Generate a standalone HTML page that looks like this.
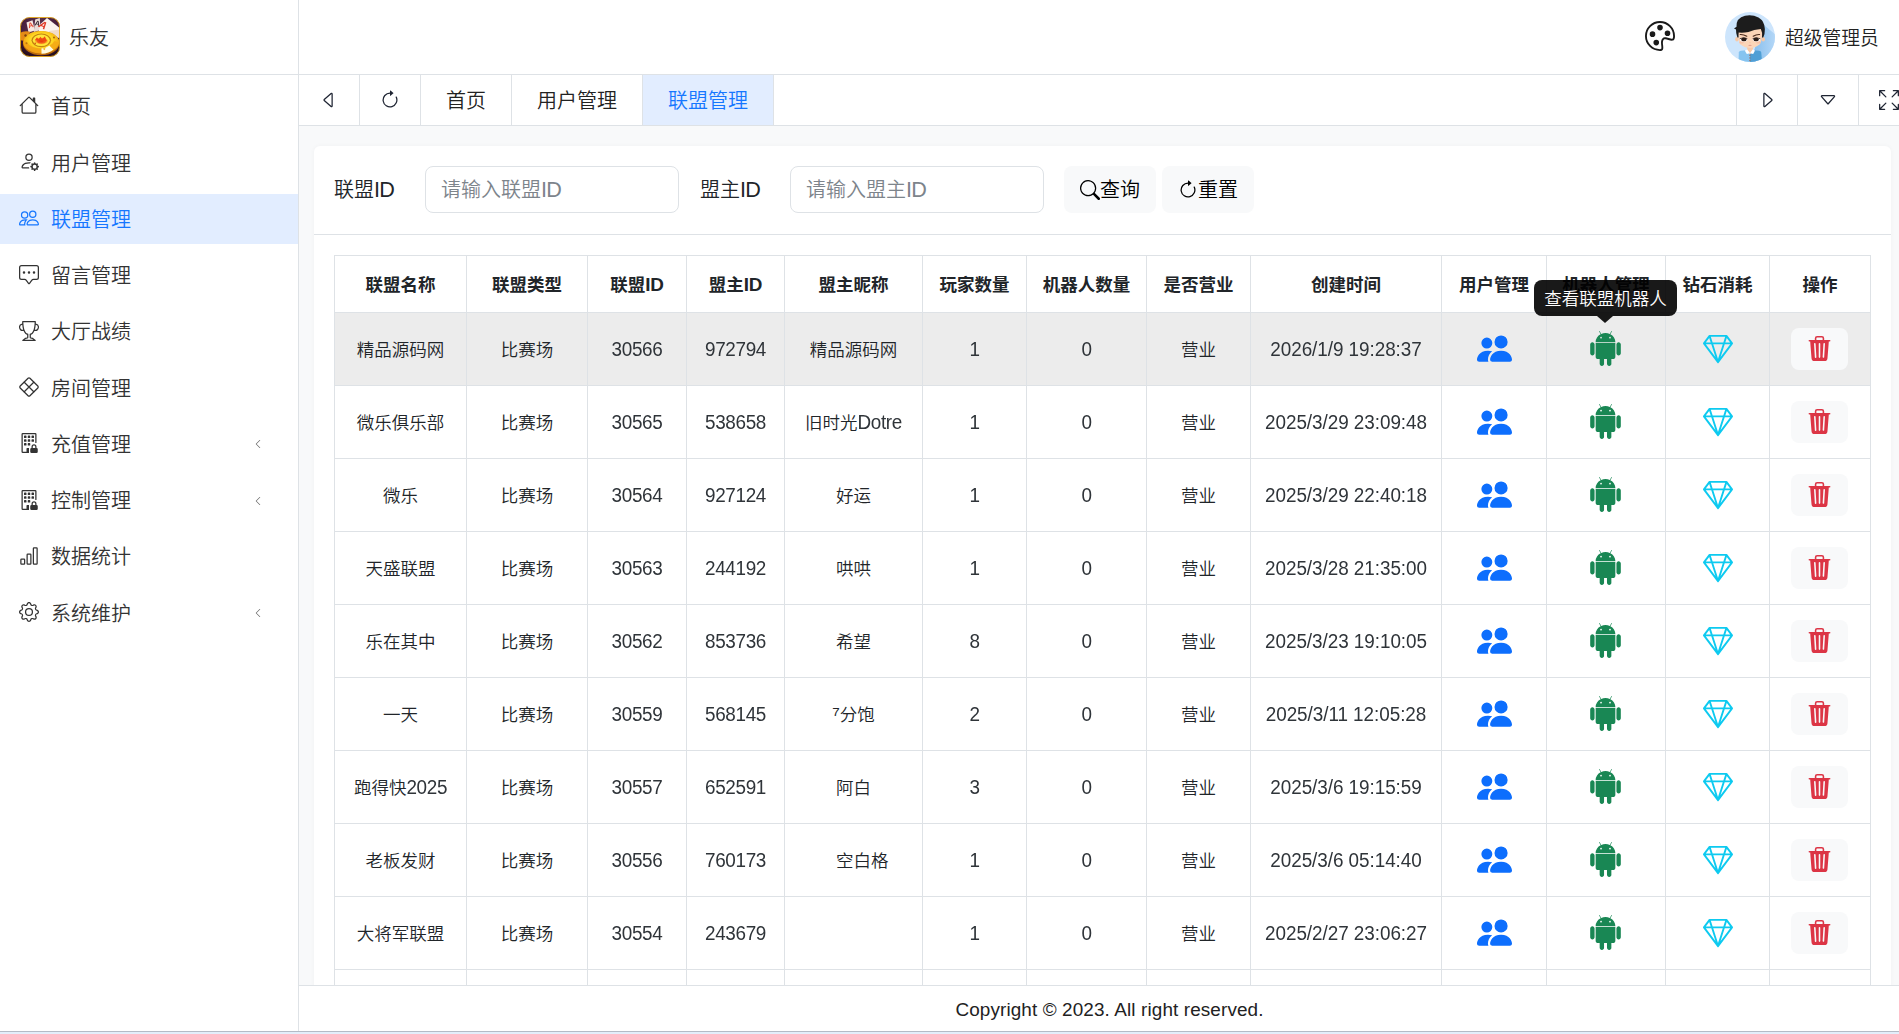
<!DOCTYPE html>
<html lang="zh-CN">
<head>
<meta charset="utf-8">
<title>联盟管理</title>
<style>
*{box-sizing:border-box}
html,body{margin:0;padding:0}
body{width:1899px;height:1034px;overflow:hidden;position:relative;background:#fff;color:#212529;
 font-family:"Liberation Sans","Noto Sans CJK SC",sans-serif;font-size:20px;line-height:1.5;font-weight:350}
svg.ic{display:inline-block;vertical-align:middle;flex:none}
.sidebar{position:absolute;left:0;top:0;width:299px;height:1031px;border-right:1px solid #dee2e6;background:#fff}
.logo{height:75px;border-bottom:1px solid #dee2e6;position:relative}
.logo svg.lg{position:absolute;left:20px;top:17px}
.brand{position:absolute;left:69px;top:8px;line-height:60px;font-size:20px;color:#333}
.menu{list-style:none;margin:0;padding:0;position:absolute;top:80.9px;left:0;width:298px}
.mi{height:50px;margin-bottom:6.4px;position:relative;color:#333;font-size:20px;line-height:50px}
.mi .mic{position:absolute;left:19px;top:14px}
.mi .mt{position:absolute;left:51px;top:1.5px}
.mi .arr{position:absolute;left:253px;top:20px;color:#666}
.mi.act{background:#e2edff;color:#1677ff}
.header{position:absolute;left:299px;top:0;width:1621px;height:75px;border-bottom:1px solid #dee2e6;background:#fff}
.header .pal{position:absolute;left:1346px;top:21px;color:#1a1a1a}
.user{position:absolute;left:1426px;top:12px;height:50px}
.user svg.av{position:absolute;left:0;top:0}
.uname{position:absolute;left:60px;top:2px;line-height:50px;font-size:18.75px;white-space:nowrap;color:#222}
.tabs{position:absolute;left:299px;top:75px;width:1621px;height:51px;border-bottom:1px solid #dee2e6;background:#fff;display:flex}
.tb{width:61px;height:50px;border-right:1px solid #dee2e6;display:flex;align-items:center;justify-content:center;color:#1f2533}
.tab{height:50px;padding:1px 25px 0;border-right:1px solid #dee2e6;line-height:50px;font-size:20px;color:#222;white-space:nowrap}
.tab.act{background:#e2edff;color:#1677ff}
.tr{position:absolute;left:1437px;top:0;display:flex;border-left:1px solid #dee2e6}
.content{position:absolute;left:299px;top:126px;width:1600px;height:859px;background:#f8f9fa;overflow:hidden}
.card{position:absolute;left:15px;top:20px;width:1577px;height:1000px;background:#fff;border-radius:6px;box-shadow:0 0 5px rgba(0,0,0,.035)}
.search{position:absolute;left:0;top:0;width:100%;height:88px}
.search label{position:absolute;top:21px;line-height:47px;font-size:20px;color:#212529}
.l1{left:20px}.l2{left:386px}
.inp{position:absolute;top:20px;width:254px;height:47px;border:1px solid #dee2e6;border-radius:8px;line-height:45px;padding-top:1px;padding-left:15px;color:#7d848b;font-size:20px;background:#fff}
.i1{left:111px}.i2{left:476px}
.btn{position:absolute;top:20px;height:47px;width:92px;padding-top:1px;border-radius:8px;background:#f8f9fa;display:flex;align-items:center;justify-content:center;font-size:20px;color:#000}
.b1{left:750px}.b2{left:848px}
.hr{position:absolute;left:0;top:88px;width:100%;height:1px;background:#dee2e6}
.tbl{position:absolute;left:20px;top:109px;border-collapse:collapse;table-layout:fixed;width:1537px;font-size:17.5px;color:#212529}
.tbl th,.tbl td{border:1px solid #dee2e6;text-align:center;vertical-align:middle;padding:0;white-space:nowrap}
.tbl th{height:57px;font-weight:bold;padding-top:3px}
.tbl td{height:73px;padding-top:2px}
.n{font-size:18.9px;line-height:1;letter-spacing:-.35px}
.n.nd{letter-spacing:-.05px}
.tbl td .n{color:#2f3439;display:inline-block;transform:scaleY(1.07);transform-origin:0 84.65%}
.s7{font-size:21px;line-height:1;position:relative;top:.5px}
.tbl th .n{letter-spacing:-.3px}
.nl{font-size:21.6px;line-height:1;letter-spacing:-.7px}
.tbl td.ci{padding:0 0 1px;line-height:0;font-size:0}
.tbl td.ci svg{display:block;margin:0 auto}
.tbl tr.hov td{background:#ececec}
.c-blue{color:#0d6efd}.c-green{color:#198754;position:relative;left:-.5px}.c-cyan{color:#0dcaf0}.c-red{color:#dc3545}
.del{display:flex;margin:0 auto;position:relative;left:-1px;align-items:center;justify-content:center;width:57px;height:42px;border-radius:8px;background:#f8f9fa;vertical-align:middle}
.tip{position:absolute;left:1220px;top:134px;width:143px}
.tipin{background:rgba(0,0,0,.9);color:#fff;font-size:17.5px;line-height:26px;padding:6px 0 4px;text-align:center;border-radius:8px;height:36px}
.tiparr{width:0;height:0;border-left:8px solid transparent;border-right:8px solid transparent;border-top:7.5px solid rgba(0,0,0,.9);margin:0 auto;position:relative;left:-1px}
.footer{position:absolute;left:299px;top:985px;width:1621px;height:46px;border-top:1px solid #dee2e6;background:#fff;text-align:center;font-size:17.5px;line-height:48px;color:#222;font-size:18.9px;letter-spacing:.12px}
.strip{position:absolute;left:0;top:1031px;width:1899px;height:3px;background:#e3eefa;border-top:1px solid #b4bbc6}

</style>
</head>
<body>
<div class="sidebar">
<div class="logo"><svg class="lg" width="40" height="40" viewBox="0 0 40 40"><defs><clipPath id="lgc"><rect x=".2" y=".2" width="39.600" height="39.600" rx="9.500"/></clipPath><radialGradient id="lgbg" cx=".5" cy=".3" r=".8"><stop offset="0" stop-color="#6a3c52"/><stop offset=".55" stop-color="#48203f"/><stop offset="1" stop-color="#1d0815"/></radialGradient><radialGradient id="lgcoin" cx=".5" cy=".42" r=".62"><stop offset="0" stop-color="#fff384"/><stop offset=".5" stop-color="#ffd822"/><stop offset=".85" stop-color="#f2a312"/><stop offset="1" stop-color="#d8800c"/></radialGradient><radialGradient id="lgfl" cx=".5" cy=".5" r=".5"><stop offset="0" stop-color="#e8300c"/><stop offset=".65" stop-color="#f26418"/><stop offset="1" stop-color="#ffb020" stop-opacity=".5"/></radialGradient><filter id="lgb" x="-10%" y="-10%" width="120%" height="120%"><feGaussianBlur stdDeviation="0.65"/></filter></defs><g clip-path="url(#lgc)"><rect width="40" height="40" fill="url(#lgbg)"/><g filter="url(#lgb)"><path d="M6.500 5.500 L12.500 3.200 L14.800 13.500 L8.500 15.500 Z" fill="#f8e9e2"/><path d="M15.200 2.600 L19.800 1 L20.500 13 L13.800 15 Z" fill="#e9dbd6"/><path d="M20.500 7 L27 1 L41 12 L41 21 L18 17 Z" fill="#fbf4ef"/><path d="M29 14 L40 12.500 L40 21 L30 18 Z" fill="#f1dccb"/><text x="8" y="10.800" font-size="7.500" font-weight="bold" fill="#e4452c" font-family="Liberation Sans,sans-serif" transform="rotate(-14 10 8)">A</text><text x="14.800" y="8.800" font-size="7.500" font-weight="bold" fill="#3a2a35" font-family="Liberation Sans,sans-serif" transform="rotate(12 17 6)">A</text><text x="21.500" y="12.500" font-size="10.500" font-weight="bold" fill="#e23a26" font-family="Liberation Sans,sans-serif" transform="rotate(24 25 9) skewX(-14)">A</text><path d="M-1 16.500 Q4 13 10.500 14.800 Q7 19 8 23.500 Q3 24.500 -1 22.500 Z" fill="#e58b14"/><ellipse cx="21.200" cy="26.300" rx="18.200" ry="12" fill="#b96a0a"/><ellipse cx="21.200" cy="25.200" rx="18" ry="11.300" fill="url(#lgcoin)"/><path d="M3.500 26 Q9 36.500 21.500 36.500 L21.500 31.500 Q11 31.500 6 24.500 Z" fill="#f3a216" opacity=".85"/><path d="M21.500 36.800 Q29 36.500 33.500 32.500 L29.500 28.500 Q26 31.300 21.500 31.500 Z" fill="#fffbe0"/><path d="M33.500 32.500 Q37.500 29.500 39 25.500 L34.500 24 Q32.800 27 29.500 28.500 Z" fill="#f5ad18"/><ellipse cx="21.300" cy="23.300" rx="9.800" ry="6.900" fill="#c48410"/><ellipse cx="21.300" cy="23.300" rx="8.500" ry="5.800" fill="#ffe63a"/><ellipse cx="21.500" cy="23.900" rx="6.600" ry="3.500" fill="url(#lgfl)"/><path d="M14.800 23.200 L17 20.300 L18.500 22.500 L20.500 19.800 L22 22.500 L24.800 19.300 L26.800 24 Z" fill="#ee4a12"/><circle cx="5.500" cy="18.500" r="1.200" fill="#7a440c"/><circle cx="34" cy="20.500" r="1" fill="#a8680f"/><circle cx="6.500" cy="26.200" r="1" fill="#b8760f"/><circle cx="15.200" cy="26.500" r=".9" fill="#d66a14"/><path d="M23 31.800 L24.300 33.300 L25.600 31.800 L24.300 31 Z" fill="#f0b020"/></g></g><rect x=".5" y=".5" width="39" height="39" rx="9.300" fill="none" stroke="#efb21c" stroke-width="1" opacity=".85"/></svg>
<span class="brand">乐友</span></div>
<ul class="menu">
<li class="mi"><svg class="ic mic" width="20" height="20" viewBox="0 0 16 16" fill="currentColor" style=""><path d="M8.707 1.5a1 1 0 0 0-1.414 0L.646 8.146a.5.5 0 0 0 .708.708L2 8.207V13.5A1.5 1.5 0 0 0 3.5 15h9a1.5 1.5 0 0 0 1.5-1.5V8.207l.646.647a.5.5 0 0 0 .708-.708L13 5.793V2.5a.5.5 0 0 0-.5-.5h-1a.5.5 0 0 0-.5.5v1.293L8.707 1.5ZM13 7.207V13.5a.5.5 0 0 1-.5.5h-9a.5.5 0 0 1-.5-.5V7.207l5-5 5 5Z"/></svg><span class="mt">首页</span></li>
<li class="mi"><svg class="ic mic" width="20" height="20" viewBox="0 0 16 16" fill="currentColor" style=""><path d="M11 5a3 3 0 1 1-6 0 3 3 0 0 1 6 0ZM8 7a2 2 0 1 0 0-4 2 2 0 0 0 0 4Zm.256 7a4.474 4.474 0 0 1-.229-1.004H3c.001-.246.154-.986.832-1.664C4.484 10.68 5.711 10 8 10c.26 0 .507.009.74.025.226-.341.496-.65.804-.918C9.077 9.038 8.564 9 8 9c-5 0-6 3-6 4s1 1 1 1h5.256Zm3.63-4.54c.18-.613 1.048-.613 1.229 0l.043.148a.64.64 0 0 0 .921.382l.136-.074c.561-.306 1.175.308.87.869l-.075.136a.64.64 0 0 0 .382.92l.149.045c.612.18.612 1.048 0 1.229l-.15.043a.64.64 0 0 0-.38.921l.074.136c.305.561-.309 1.175-.87.87l-.136-.075a.64.64 0 0 0-.92.382l-.045.149c-.18.612-1.048.612-1.229 0l-.043-.15a.64.64 0 0 0-.921-.38l-.136.074c-.561.305-1.175-.309-.87-.87l.075-.136a.64.64 0 0 0-.382-.92l-.148-.045c-.613-.18-.613-1.048 0-1.229l.148-.043a.64.64 0 0 0 .382-.921l-.074-.136c-.306-.561.308-1.175.869-.87l.136.075a.64.64 0 0 0 .92-.382l.045-.148ZM14 12.5a1.5 1.5 0 1 0-3 0 1.5 1.5 0 0 0 3 0Z"/></svg><span class="mt">用户管理</span></li>
<li class="mi act"><svg class="ic mic" width="20" height="20" viewBox="0 0 16 16" fill="currentColor" style=""><path d="M15 14s1 0 1-1-1-4-5-4-5 3-5 4 1 1 1 1h8Zm-7.978-1A.261.261 0 0 1 7 12.996c.001-.264.167-1.03.76-1.72C8.312 10.629 9.282 10 11 10c1.717 0 2.687.63 3.24 1.276.593.69.758 1.457.76 1.72l-.008.002a.274.274 0 0 1-.014.002H7.022ZM11 7a2 2 0 1 0 0-4 2 2 0 0 0 0 4Zm3-2a3 3 0 1 1-6 0 3 3 0 0 1 6 0ZM6.936 9.28a5.88 5.88 0 0 0-1.23-.247A7.35 7.35 0 0 0 5 9c-4 0-5 3-5 4 0 .667.333 1 1 1h4.216A2.238 2.238 0 0 1 5 13c0-1.01.377-2.042 1.09-2.904.243-.294.526-.569.846-.816ZM4.92 10A5.493 5.493 0 0 0 4 13H1c0-.26.164-1.03.76-1.724.545-.636 1.492-1.256 3.16-1.275ZM1.5 5.5a3 3 0 1 1 6 0 3 3 0 0 1-6 0Zm3-2a2 2 0 1 0 0 4 2 2 0 0 0 0-4Z"/></svg><span class="mt">联盟管理</span></li>
<li class="mi"><svg class="ic mic" width="20" height="20" viewBox="0 0 16 16" fill="currentColor" style="top:15px"><path d="M14 1a1 1 0 0 1 1 1v8a1 1 0 0 1-1 1h-2.5a2 2 0 0 0-1.6.8L8 14.333 6.1 11.8a2 2 0 0 0-1.6-.8H2a1 1 0 0 1-1-1V2a1 1 0 0 1 1-1h12zM2 0a2 2 0 0 0-2 2v8a2 2 0 0 0 2 2h2.5a1 1 0 0 1 .8.4l1.9 2.533a1 1 0 0 0 1.6 0l1.9-2.533a1 1 0 0 1 .8-.4H14a2 2 0 0 0 2-2V2a2 2 0 0 0-2-2H2z"/><path d="M5 6a1 1 0 1 1-2 0 1 1 0 0 1 2 0zm4 0a1 1 0 1 1-2 0 1 1 0 0 1 2 0zm4 0a1 1 0 1 1-2 0 1 1 0 0 1 2 0z"/></svg><span class="mt" style="top:0.5px">留言管理</span></li>
<li class="mi"><svg class="ic mic" width="20" height="20" viewBox="0 0 16 16" fill="currentColor" style="top:15px"><path d="M2.5.5A.5.5 0 0 1 3 0h10a.5.5 0 0 1 .5.5c0 .538-.012 1.05-.034 1.536a3 3 0 1 1-1.133 5.89c-.79 1.865-1.878 2.777-2.833 3.011v2.173l1.425.356c.194.048.377.135.537.255L13.3 15.1a.5.5 0 0 1-.3.9H3a.5.5 0 0 1-.3-.9l1.838-1.379c.16-.12.343-.207.537-.255L6.5 13.11v-2.173c-.955-.234-2.043-1.146-2.833-3.012a3 3 0 1 1-1.132-5.89A33.076 33.076 0 0 1 2.5.5zm.099 2.54a2 2 0 0 0 .72 3.935c-.333-1.05-.588-2.346-.72-3.935zm10.083 3.935a2 2 0 0 0 .72-3.935c-.133 1.59-.388 2.885-.72 3.935zM3.504 1c.007.517.026 1.006.056 1.469.13 2.028.457 3.546.87 4.667C5.294 9.48 6.484 10 7 10a.5.5 0 0 1 .5.5v2.61a1 1 0 0 1-.757.97l-1.426.356a.5.5 0 0 0-.179.085L4.5 15h7l-.638-.479a.501.501 0 0 0-.18-.085l-1.425-.356a1 1 0 0 1-.757-.97V10.5A.5.5 0 0 1 9 10c.516 0 1.706-.52 2.57-2.864.413-1.12.74-2.64.87-4.667.03-.463.049-.952.056-1.469H3.504z"/></svg><span class="mt" style="top:0.5px">大厅战绩</span></li>
<li class="mi"><svg class="ic mic" width="20" height="20" viewBox="0 0 16 16" fill="currentColor" style=""><g fill="none" stroke="currentColor" stroke-width="1" stroke-linejoin="round" stroke-linecap="round"><path d="M8.75 .95 15.05 7.25a1.06 1.06 0 0 1 0 1.5L8.75 15.05a1.06 1.06 0 0 1-1.5 0L.95 8.75a1.06 1.06 0 0 1 0-1.5L7.25 .95a1.06 1.06 0 0 1 1.5 0Z"/><path d="M4.2 4.2 11.8 11.8M11.8 4.2 4.2 11.8"/></g></svg><span class="mt">房间管理</span></li>
<li class="mi"><svg class="ic mic" width="20" height="20" viewBox="0 0 16 16" fill="currentColor" style=""><path d="M2 1a1 1 0 0 1 1-1h10a1 1 0 0 1 1 1v6.5a.5.5 0 0 1-1 0V1H3v14h3v-2.5a.5.5 0 0 1 .5-.5H8v4H3a1 1 0 0 1-1-1V1Z"/><path d="M4.5 2a.5.5 0 0 0-.5.5v1a.5.5 0 0 0 .5.5h1a.5.5 0 0 0 .5-.5v-1a.5.5 0 0 0-.5-.5h-1Zm2.5.5a.5.5 0 0 1 .5-.5h1a.5.5 0 0 1 .5.5v1a.5.5 0 0 1-.5.5h-1a.5.5 0 0 1-.5-.5v-1Zm3.500-.5a.5.5 0 0 0-.5.5v1a.5.5 0 0 0 .5.5h1a.5.5 0 0 0 .5-.5v-1a.5.5 0 0 0-.5-.5h-1ZM4 5.500a.5.5 0 0 1 .5-.5h1a.5.5 0 0 1 .5.5v1a.5.5 0 0 1-.5.5h-1a.5.5 0 0 1-.5-.5v-1Zm3.500-.5a.5.5 0 0 0-.5.5v1a.5.5 0 0 0 .5.5h1a.5.5 0 0 0 .5-.5v-1a.5.5 0 0 0-.5-.5h-1Zm2.500.5a.5.5 0 0 1 .5-.5h1a.5.5 0 0 1 .5.5v1a.5.5 0 0 1-.5.5h-1a.5.5 0 0 1-.5-.5v-1ZM4.500 8a.5.5 0 0 0-.5.5v1a.5.5 0 0 0 .5.5h1a.5.5 0 0 0 .5-.5v-1a.5.5 0 0 0-.5-.5h-1Zm2.500.5a.5.5 0 0 1 .5-.5h1a.5.5 0 0 1 .5.5v1a.5.5 0 0 1-.5.5h-1a.5.5 0 0 1-.5-.5v-1ZM9 13a1 1 0 0 1 1-1v-1a2 2 0 1 1 4 0v1a1 1 0 0 1 1 1v2a1 1 0 0 1-1 1h-4a1 1 0 0 1-1-1v-2Zm3-3a1 1 0 0 0-1 1v1h2v-1a1 1 0 0 0-1-1Z"/></svg><span class="mt" style="top:0.5px">充值管理</span><svg class="ic arr" width="10" height="10" viewBox="0 0 16 16" fill="currentColor" style=""><path fill-rule="evenodd" d="M11.354 1.646a.5.5 0 0 1 0 .708L5.707 8l5.647 5.646a.5.5 0 0 1-.708.708l-6-6a.5.5 0 0 1 0-.708l6-6a.5.5 0 0 1 .708 0z"/></svg></li>
<li class="mi"><svg class="ic mic" width="20" height="20" viewBox="0 0 16 16" fill="currentColor" style=""><path d="M2 1a1 1 0 0 1 1-1h10a1 1 0 0 1 1 1v6.5a.5.5 0 0 1-1 0V1H3v14h3v-2.5a.5.5 0 0 1 .5-.5H8v4H3a1 1 0 0 1-1-1V1Z"/><path d="M4.5 2a.5.5 0 0 0-.5.5v1a.5.5 0 0 0 .5.5h1a.5.5 0 0 0 .5-.5v-1a.5.5 0 0 0-.5-.5h-1Zm2.5.5a.5.5 0 0 1 .5-.5h1a.5.5 0 0 1 .5.5v1a.5.5 0 0 1-.5.5h-1a.5.5 0 0 1-.5-.5v-1Zm3.500-.5a.5.5 0 0 0-.5.5v1a.5.5 0 0 0 .5.5h1a.5.5 0 0 0 .5-.5v-1a.5.5 0 0 0-.5-.5h-1ZM4 5.500a.5.5 0 0 1 .5-.5h1a.5.5 0 0 1 .5.5v1a.5.5 0 0 1-.5.5h-1a.5.5 0 0 1-.5-.5v-1Zm3.500-.5a.5.5 0 0 0-.5.5v1a.5.5 0 0 0 .5.5h1a.5.5 0 0 0 .5-.5v-1a.5.5 0 0 0-.5-.5h-1Zm2.500.5a.5.5 0 0 1 .5-.5h1a.5.5 0 0 1 .5.5v1a.5.5 0 0 1-.5.5h-1a.5.5 0 0 1-.5-.5v-1ZM4.500 8a.5.5 0 0 0-.5.5v1a.5.5 0 0 0 .5.5h1a.5.5 0 0 0 .5-.5v-1a.5.5 0 0 0-.5-.5h-1Zm2.500.5a.5.5 0 0 1 .5-.5h1a.5.5 0 0 1 .5.5v1a.5.5 0 0 1-.5.5h-1a.5.5 0 0 1-.5-.5v-1ZM9 13a1 1 0 0 1 1-1v-1a2 2 0 1 1 4 0v1a1 1 0 0 1 1 1v2a1 1 0 0 1-1 1h-4a1 1 0 0 1-1-1v-2Zm3-3a1 1 0 0 0-1 1v1h2v-1a1 1 0 0 0-1-1Z"/></svg><span class="mt" style="top:0.5px">控制管理</span><svg class="ic arr" width="10" height="10" viewBox="0 0 16 16" fill="currentColor" style=""><path fill-rule="evenodd" d="M11.354 1.646a.5.5 0 0 1 0 .708L5.707 8l5.647 5.646a.5.5 0 0 1-.708.708l-6-6a.5.5 0 0 1 0-.708l6-6a.5.5 0 0 1 .708 0z"/></svg></li>
<li class="mi"><svg class="ic mic" width="20" height="20" viewBox="0 0 16 16" fill="currentColor" style=""><path d="M4 11H2v3h2v-3zm5-4H7v7h2V7zm5-5v12h-2V2h2zm-2-1a1 1 0 0 0-1 1v12a1 1 0 0 0 1 1h2a1 1 0 0 0 1-1V2a1 1 0 0 0-1-1h-2zM6 7a1 1 0 0 1 1-1h2a1 1 0 0 1 1 1v7a1 1 0 0 1-1 1H7a1 1 0 0 1-1-1V7zm-5 4a1 1 0 0 1 1-1h2a1 1 0 0 1 1 1v3a1 1 0 0 1-1 1H2a1 1 0 0 1-1-1v-3z"/></svg><span class="mt" style="top:-0.5px">数据统计</span></li>
<li class="mi"><svg class="ic mic" width="20" height="20" viewBox="0 0 16 16" fill="currentColor" style=""><path d="M8 4.754a3.246 3.246 0 1 0 0 6.492 3.246 3.246 0 0 0 0-6.492zM5.754 8a2.246 2.246 0 1 1 4.492 0 2.246 2.246 0 0 1-4.492 0z"/><path d="M9.796 1.343c-.527-1.79-3.065-1.79-3.592 0l-.094.319a.873.873 0 0 1-1.255.52l-.292-.16c-1.64-.892-3.433.902-2.54 2.541l.159.292a.873.873 0 0 1-.52 1.255l-.319.094c-1.79.527-1.79 3.065 0 3.592l.319.094a.873.873 0 0 1 .52 1.255l-.16.292c-.892 1.64.901 3.434 2.541 2.54l.292-.159a.873.873 0 0 1 1.255.52l.094.319c.527 1.79 3.065 1.79 3.592 0l.094-.319a.873.873 0 0 1 1.255-.52l.292.16c1.64.893 3.434-.902 2.54-2.541l-.159-.292a.873.873 0 0 1 .52-1.255l.319-.094c1.79-.527 1.79-3.065 0-3.592l-.319-.094a.873.873 0 0 1-.52-1.255l.16-.292c.893-1.64-.902-3.433-2.541-2.54l-.292.159a.873.873 0 0 1-1.255-.52l-.094-.319zm-2.633.283c.246-.835 1.428-.835 1.674 0l.094.319a1.873 1.873 0 0 0 2.693 1.115l.291-.16c.764-.415 1.6.42 1.184 1.185l-.159.292a1.873 1.873 0 0 0 1.116 2.692l.318.094c.835.246.835 1.428 0 1.674l-.319.094a1.873 1.873 0 0 0-1.115 2.693l.16.291c.415.764-.42 1.6-1.185 1.184l-.291-.159a1.873 1.873 0 0 0-2.693 1.116l-.094.318c-.246.835-1.428.835-1.674 0l-.094-.319a1.873 1.873 0 0 0-2.692-1.115l-.292.16c-.764.415-1.6-.42-1.184-1.185l.159-.291A1.873 1.873 0 0 0 1.945 8.93l-.319-.094c-.835-.246-.835-1.428 0-1.674l.319-.094A1.873 1.873 0 0 0 3.06 4.377l-.16-.292c-.415-.764.42-1.6 1.185-1.184l.292.159a1.873 1.873 0 0 0 2.692-1.115l.094-.319z"/></svg><span class="mt" style="top:0.5px">系统维护</span><svg class="ic arr" width="10" height="10" viewBox="0 0 16 16" fill="currentColor" style=""><path fill-rule="evenodd" d="M11.354 1.646a.5.5 0 0 1 0 .708L5.707 8l5.647 5.646a.5.5 0 0 1-.708.708l-6-6a.5.5 0 0 1 0-.708l6-6a.5.5 0 0 1 .708 0z"/></svg></li>
</ul>
</div>
<div class="header"><svg class="ic pal" width="30" height="30" viewBox="0 0 16 16" fill="currentColor" style=""><path d="M8 5a1.500 1.500 0 1 0 0-3 1.500 1.500 0 0 0 0 3zm4 3a1.500 1.500 0 1 0 0-3 1.500 1.500 0 0 0 0 3zM5.500 7a1.500 1.500 0 1 1-3 0 1.500 1.500 0 0 1 3 0zm.5 6a1.500 1.500 0 1 0 0-3 1.500 1.500 0 0 0 0 3z"/><path d="M16 8c0 3.150-1.866 2.585-3.567 2.070C11.420 9.763 10.465 9.473 10 10c-.603.683-.475 1.819-.351 2.920C9.826 14.495 9.996 16 8 16a8 8 0 1 1 8-8zm-8 7c.611 0 .654-.171.655-.176.078-.146.124-.464.070-1.119-.014-.168-.037-.370-.061-.591-.052-.464-.112-1.005-.118-1.462-.010-.707.083-1.610.704-2.314.369-.417.845-.578 1.272-.618.404-.038.812.026 1.160.104.343.077.702.186 1.025.284l.028.008c.346.105.658.199.953.266.653.148.904.083.991.024C14.717 9.380 15 9.161 15 8a7 7 0 1 0-7 7z"/></svg><div class="user"><svg class="av" width="50" height="50" viewBox="0 0 50 50"><defs><clipPath id="avc"><circle cx="25" cy="25" r="25"/></clipPath><linearGradient id="avs" x1="0" y1="0" x2="1" y2="0"><stop offset="0" stop-color="#7fb9ea"/><stop offset="1" stop-color="#b7d9f8"/></linearGradient><filter id="avb" x="-10%" y="-10%" width="120%" height="120%"><feGaussianBlur stdDeviation="0.25"/></filter></defs><g clip-path="url(#avc)"><rect width="50" height="50" fill="#cde5fc"/><path d="M33 8 L52 24 L52 52 L24 52 L30 36 Z" fill="url(#avs)"/><g filter="url(#avb)"><path d="M13.500 50 L13.800 40.500 Q14 39 16 38.800 L22 38.200 L28 38.200 L34 38.800 Q36 39 36.200 40.500 L37 50 Z" fill="#86c4f0"/><path d="M25 38.200 L28 38.200 L34 38.800 Q36 39 36.200 40.500 L37 50 L25 50 Z" fill="#4f9fd5"/><path d="M22.200 34 H28 V40 L25 42 L22.200 40 Z" fill="#f7c9a8"/><path d="M19.800 38.600 L22.300 37.600 L25 41.300 L21.800 41.900 Z" fill="#fff"/><path d="M30 38.600 L27.700 37.600 L25 41.300 L28.200 41.900 Z" fill="#fff"/><circle cx="24.900" cy="43.300" r=".7" fill="#9c6b5e"/><circle cx="24.900" cy="45.900" r=".7" fill="#9c6b5e"/><circle cx="24.900" cy="48.500" r=".7" fill="#9c6b5e"/><ellipse cx="11.900" cy="27.300" rx="1.700" ry="2.200" fill="#f7c9a8"/><ellipse cx="38.300" cy="27.300" rx="1.700" ry="2.200" fill="#f7c9a8"/><path d="M12.800 13 Q12.500 30 15.500 32.500 Q20 36 25 36 Q30 36 34.500 32.500 Q37.500 30 37.300 13 Z" fill="#fbd5b8"/><ellipse cx="16.500" cy="30.400" rx="2.200" ry="1.200" fill="#f5b9a0" opacity=".7"/><ellipse cx="33.600" cy="30.400" rx="2.200" ry="1.200" fill="#f5b9a0" opacity=".7"/><path d="M9 16.500 L11.500 14.800 Q11 6 20 3.800 Q27 2.200 33.500 5.500 Q39.500 9 39.900 17 Q40 22 38.200 25.500 L37 25.600 Q37.800 20.500 35.800 16.900 Q29 17.500 23.500 20 Q18 21 13.700 20.500 Q13.400 23 13.600 25.600 L12.400 25.500 Q10.800 21 11 17.500 Z" fill="#1e1e1e"/><path d="M15.200 22.500 Q18.500 22.300 21.800 24.200" stroke="#4a2a1c" stroke-width="1.100" fill="none" stroke-linecap="round"/><path d="M34.600 22.500 Q31.300 22.300 28.200 24.200" stroke="#4a2a1c" stroke-width="1.100" fill="none" stroke-linecap="round"/><ellipse cx="18.600" cy="27.500" rx="3.700" ry="2" fill="#fff"/><ellipse cx="31.400" cy="27.500" rx="3.700" ry="2" fill="#fff"/><ellipse cx="18.900" cy="27.400" rx="2.700" ry="1.900" fill="#2c1b17"/><ellipse cx="31.100" cy="27.400" rx="2.700" ry="1.900" fill="#2c1b17"/><path d="M14.800 26.700 Q18.500 24.900 22.300 26.600" stroke="#2c1b17" stroke-width=".8" fill="none"/><path d="M35.200 26.700 Q31.500 24.900 27.700 26.600" stroke="#2c1b17" stroke-width=".8" fill="none"/><path d="M23 33.200 Q25 32.500 27 33.200 Q25 34.600 23 33.200 Z" fill="#e39a8c"/><path d="M24.300 30.600 Q25 31 25.700 30.600" stroke="#eab596" stroke-width=".5" fill="none"/></g></g></svg>
<span class="uname">超级管理员</span></div></div>
<div class="tabs"><div class="tb"><svg class="ic " width="20" height="20" viewBox="0 0 16 16" fill="currentColor" style=""><path d="M10 12.796V3.204L4.519 8 10 12.796zm-.659.753-5.480-4.796a1 1 0 0 1 0-1.506l5.480-4.796A1 1 0 0 1 11 3.204v9.592a1 1 0 0 1-1.659.753z"/></svg></div><div class="tb"><svg class="ic " width="20" height="20" viewBox="0 0 16 16" fill="currentColor" style=""><path fill-rule="evenodd" d="M8 3a5 5 0 1 0 4.546 2.914.5.5 0 0 1 .908-.417A6 6 0 1 1 8 2v1z"/><path d="M8 4.466V.534a.25.25 0 0 1 .41-.192l2.360 1.966c.12.1.12.284 0 .384L8.410 4.658A.25.25 0 0 1 8 4.466z"/></svg></div><div class="tab">首页</div><div class="tab">用户管理</div><div class="tab act">联盟管理</div><div class="tr"><div class="tb"><svg class="ic " width="20" height="20" viewBox="0 0 16 16" fill="currentColor" style=""><path d="M6 12.796V3.204L11.481 8 6 12.796zm.659.753 5.480-4.796a1 1 0 0 0 0-1.506L6.660 2.451C6.011 1.885 5 2.345 5 3.204v9.592a1 1 0 0 0 1.659.753z"/></svg></div><div class="tb"><svg class="ic " width="20" height="20" viewBox="0 0 16 16" fill="currentColor" style=""><path d="M3.204 5h9.592L8 10.481 3.204 5zm-.753.659 4.796 5.480a1 1 0 0 0 1.506 0l4.796-5.480c.566-.647.106-1.659-.753-1.659H3.204a1 1 0 0 0-.753 1.659z"/></svg></div><div class="tb"><svg class="ic " width="20" height="20" viewBox="0 0 16 16" fill="currentColor" style=""><path fill-rule="evenodd" d="M5.828 10.172a.5.5 0 0 0-.707 0l-4.096 4.096V11.500a.5.5 0 0 0-1 0v3.975a.5.5 0 0 0 .5.5H4.500a.5.5 0 0 0 0-1H1.732l4.096-4.096a.5.5 0 0 0 0-.707zm4.344 0a.5.5 0 0 1 .707 0l4.096 4.096V11.500a.5.5 0 1 1 1 0v3.975a.5.5 0 0 1-.5.5H11.500a.5.5 0 0 1 0-1h2.768l-4.096-4.096a.5.5 0 0 1 0-.707zm0-4.344a.5.5 0 0 0 .707 0l4.096-4.096V4.500a.5.5 0 1 0 1 0V.525a.5.5 0 0 0-.5-.5H11.500a.5.5 0 0 0 0 1h2.768l-4.096 4.096a.5.5 0 0 0 0 .707zm-4.344 0a.5.5 0 0 1-.707 0L1.025 1.732V4.500a.5.5 0 0 1-1 0V.525a.5.5 0 0 1 .5-.5H4.500a.5.5 0 0 1 0 1H1.732l4.096 4.096a.5.5 0 0 1 0 .707z"/></svg></div></div></div>
<div class="content"><div class="card">
<div class="search"><label class="l1">联盟<span class="nl">ID</span></label><div class="inp i1">请输入联盟<span class="nl">ID</span></div><label class="l2">盟主<span class="nl">ID</span></label><div class="inp i2">请输入盟主<span class="nl">ID</span></div><div class="btn b1"><svg class="ic " width="20" height="20" viewBox="0 0 16 16" fill="currentColor" style=""><path d="M11.742 10.344a6.500 6.500 0 1 0-1.397 1.398h-.001c.03.04.062.078.098.115l3.850 3.850a1 1 0 0 0 1.415-1.414l-3.850-3.850a1.007 1.007 0 0 0-.115-.1zM12 6.500a5.500 5.500 0 1 1-11 0 5.500 5.500 0 0 1 11 0z"/></svg><span>查询</span></div><div class="btn b2"><svg class="ic " width="20" height="20" viewBox="0 0 16 16" fill="currentColor" style=""><path fill-rule="evenodd" d="M8 3a5 5 0 1 0 4.546 2.914.5.5 0 0 1 .908-.417A6 6 0 1 1 8 2v1z"/><path d="M8 4.466V.534a.25.25 0 0 1 .41-.192l2.360 1.966c.12.1.12.284 0 .384L8.410 4.658A.25.25 0 0 1 8 4.466z"/></svg><span>重置</span></div></div>
<div class="hr"></div>
<table class="tbl"><colgroup><col style="width:132px"><col style="width:121px"><col style="width:99px"><col style="width:98px"><col style="width:138px"><col style="width:104px"><col style="width:120px"><col style="width:104px"><col style="width:191px"><col style="width:105px"><col style="width:119px"><col style="width:104px"><col style="width:101px"></colgroup>
<thead><tr><th>联盟名称</th><th>联盟类型</th><th>联盟<span class="n">ID</span></th><th>盟主<span class="n">ID</span></th><th>盟主昵称</th><th>玩家数量</th><th>机器人数量</th><th>是否营业</th><th>创建时间</th><th>用户管理</th><th>机器人管理</th><th>钻石消耗</th><th>操作</th></tr></thead>
<tbody>
<tr class="hov"><td>精品源码网</td><td>比赛场</td><td><span class="n">30566</span></td><td><span class="n">972794</span></td><td>精品源码网</td><td><span class="n">1</span></td><td><span class="n">0</span></td><td>营业</td><td><span class="n nd">2026/1/9 19:28:37</span></td><td class="ci"><svg class="ic c-blue" width="35" height="35" viewBox="0 0 16 16" fill="currentColor" style=""><path d="M7 14s-1 0-1-1 1-4 5-4 5 3 5 4-1 1-1 1H7Zm4-6a3 3 0 1 0 0-6 3 3 0 0 0 0 6Zm-5.784 6A2.238 2.238 0 0 1 5 13c0-1.355.68-2.75 1.936-3.72A6.325 6.325 0 0 0 5 9c-4 0-5 3-5 4s1 1 1 1h4.216ZM4.5 8a2.5 2.5 0 1 0 0-5 2.5 2.5 0 0 0 0 5Z"/></svg></td><td class="ci"><svg class="ic c-green" width="35" height="35" viewBox="0 0 16 16" fill="currentColor" style=""><path d="m10.213 1.471.691-1.260c.046-.083.03-.147-.048-.192-.085-.038-.15-.019-.195.058l-.7 1.270A4.832 4.832 0 0 0 8.005.941c-.688 0-1.340.135-1.956.404l-.7-1.270C5.303 0 5.239-.020 5.154.020c-.078.046-.094.110-.049.193l.691 1.259a4.250 4.250 0 0 0-1.673 1.476A3.697 3.697 0 0 0 3.500 5.020h9c0-.750-.208-1.440-.623-2.072a4.266 4.266 0 0 0-1.664-1.476ZM6.220 3.303a.367.367 0 0 1-.267.110.350.350 0 0 1-.263-.110.366.366 0 0 1-.107-.264.370.370 0 0 1 .107-.265.351.351 0 0 1 .263-.110c.103 0 .193.037.267.110a.360.360 0 0 1 .112.265.360.360 0 0 1-.112.264Zm4.101 0a.351.351 0 0 1-.262.110.366.366 0 0 1-.268-.110.358.358 0 0 1-.112-.264c0-.103.037-.191.112-.265a.367.367 0 0 1 .268-.110c.104 0 .19.037.262.110a.367.367 0 0 1 .107.265c0 .102-.035.190-.107.264ZM3.500 11.770c0 .294.104.544.311.750.208.204.460.307.760.307h.758l.010 2.182c0 .276.097.510.292.703a.961.961 0 0 0 .7.288.973.973 0 0 0 .710-.288.950.950 0 0 0 .292-.703v-2.182h1.343v2.182c0 .276.097.510.292.703a.972.972 0 0 0 .710.288.973.973 0 0 0 .710-.288.950.950 0 0 0 .292-.703v-2.182h.760c.291 0 .540-.103.749-.308.207-.205.311-.455.311-.750V5.365h-9v6.404Zm10.495-6.587a.983.983 0 0 0-.702.278.910.910 0 0 0-.293.685v4.063c0 .271.098.501.293.690a.970.970 0 0 0 .702.284c.280 0 .517-.095.712-.284a.924.924 0 0 0 .293-.690V6.146a.910.910 0 0 0-.293-.685.995.995 0 0 0-.712-.278Zm-12.702.283a.985.985 0 0 1 .712-.283c.273 0 .507.094.702.283a.913.913 0 0 1 .293.680v4.063a.932.932 0 0 1-.288.690.970.970 0 0 1-.707.284.986.986 0 0 1-.712-.284.924.924 0 0 1-.293-.690V6.146c0-.264.098-.491.293-.680Z"/></svg></td><td class="ci"><svg class="ic c-cyan" width="30" height="30" viewBox="0 0 16 16" fill="currentColor" style=""><path d="M3.100.700a.5.5 0 0 1 .4-.2h9a.5.5 0 0 1 .4.2l2.976 3.974c.149.185.156.450.010.644L8.400 15.300a.5.5 0 0 1-.8 0L.1 5.300a.5.5 0 0 1 0-.6l3-4zm11.386 3.785-1.806-2.410-.776 2.413 2.582-.003zm-3.633.004.961-2.989H4.186l.963 2.995 5.704-.006zM5.470 5.495 8 13.366l2.532-7.876-5.062.005zm-1.371-.999-.780-2.422-1.818 2.425 2.598-.003zM1.499 5.500l5.113 6.817-2.192-6.820L1.500 5.500zm7.889 6.817 5.123-6.830-2.928.002-2.195 6.828z"/></svg></td><td class="ci"><span class="del"><svg class="ic c-red" width="25" height="25" viewBox="0 0 16 16" fill="currentColor" style=""><path d="M11 1.5v1h3.5a.5.5 0 0 1 0 1h-.538l-.853 10.660A2 2 0 0 1 11.115 16h-6.230a2 2 0 0 1-1.994-1.840L2.038 3.5H1.5a.5.5 0 0 1 0-1H5v-1A1.500 1.500 0 0 1 6.500 0h3A1.500 1.500 0 0 1 11 1.500Zm-5 0v1h4v-1a.5.5 0 0 0-.5-.5h-3a.5.5 0 0 0-.5.5ZM4.500 5.029l.5 8.500a.5.5 0 1 0 .998-.060l-.5-8.500a.5.5 0 1 0-.998.060Zm6.530-.528a.5.5 0 0 0-.528.470l-.5 8.500a.5.5 0 0 0 .998.058l.5-8.500a.5.5 0 0 0-.470-.528ZM8 4.500a.5.5 0 0 0-.5.5v8.500a.5.5 0 0 0 1 0V5a.5.5 0 0 0-.5-.5Z"/></svg></span></td></tr>
<tr><td>微乐俱乐部</td><td>比赛场</td><td><span class="n">30565</span></td><td><span class="n">538658</span></td><td>旧时光<span class="n">Dotre</span></td><td><span class="n">1</span></td><td><span class="n">0</span></td><td>营业</td><td><span class="n nd">2025/3/29 23:09:48</span></td><td class="ci"><svg class="ic c-blue" width="35" height="35" viewBox="0 0 16 16" fill="currentColor" style=""><path d="M7 14s-1 0-1-1 1-4 5-4 5 3 5 4-1 1-1 1H7Zm4-6a3 3 0 1 0 0-6 3 3 0 0 0 0 6Zm-5.784 6A2.238 2.238 0 0 1 5 13c0-1.355.68-2.75 1.936-3.72A6.325 6.325 0 0 0 5 9c-4 0-5 3-5 4s1 1 1 1h4.216ZM4.5 8a2.5 2.5 0 1 0 0-5 2.5 2.5 0 0 0 0 5Z"/></svg></td><td class="ci"><svg class="ic c-green" width="35" height="35" viewBox="0 0 16 16" fill="currentColor" style=""><path d="m10.213 1.471.691-1.260c.046-.083.03-.147-.048-.192-.085-.038-.15-.019-.195.058l-.7 1.270A4.832 4.832 0 0 0 8.005.941c-.688 0-1.340.135-1.956.404l-.7-1.270C5.303 0 5.239-.020 5.154.020c-.078.046-.094.110-.049.193l.691 1.259a4.250 4.250 0 0 0-1.673 1.476A3.697 3.697 0 0 0 3.500 5.020h9c0-.750-.208-1.440-.623-2.072a4.266 4.266 0 0 0-1.664-1.476ZM6.220 3.303a.367.367 0 0 1-.267.110.350.350 0 0 1-.263-.110.366.366 0 0 1-.107-.264.370.370 0 0 1 .107-.265.351.351 0 0 1 .263-.110c.103 0 .193.037.267.110a.360.360 0 0 1 .112.265.360.360 0 0 1-.112.264Zm4.101 0a.351.351 0 0 1-.262.110.366.366 0 0 1-.268-.110.358.358 0 0 1-.112-.264c0-.103.037-.191.112-.265a.367.367 0 0 1 .268-.110c.104 0 .19.037.262.110a.367.367 0 0 1 .107.265c0 .102-.035.190-.107.264ZM3.500 11.770c0 .294.104.544.311.750.208.204.460.307.760.307h.758l.010 2.182c0 .276.097.510.292.703a.961.961 0 0 0 .7.288.973.973 0 0 0 .710-.288.950.950 0 0 0 .292-.703v-2.182h1.343v2.182c0 .276.097.510.292.703a.972.972 0 0 0 .710.288.973.973 0 0 0 .710-.288.950.950 0 0 0 .292-.703v-2.182h.760c.291 0 .540-.103.749-.308.207-.205.311-.455.311-.750V5.365h-9v6.404Zm10.495-6.587a.983.983 0 0 0-.702.278.910.910 0 0 0-.293.685v4.063c0 .271.098.501.293.690a.970.970 0 0 0 .702.284c.280 0 .517-.095.712-.284a.924.924 0 0 0 .293-.690V6.146a.910.910 0 0 0-.293-.685.995.995 0 0 0-.712-.278Zm-12.702.283a.985.985 0 0 1 .712-.283c.273 0 .507.094.702.283a.913.913 0 0 1 .293.680v4.063a.932.932 0 0 1-.288.690.970.970 0 0 1-.707.284.986.986 0 0 1-.712-.284.924.924 0 0 1-.293-.690V6.146c0-.264.098-.491.293-.680Z"/></svg></td><td class="ci"><svg class="ic c-cyan" width="30" height="30" viewBox="0 0 16 16" fill="currentColor" style=""><path d="M3.100.700a.5.5 0 0 1 .4-.2h9a.5.5 0 0 1 .4.2l2.976 3.974c.149.185.156.450.010.644L8.400 15.300a.5.5 0 0 1-.8 0L.1 5.300a.5.5 0 0 1 0-.6l3-4zm11.386 3.785-1.806-2.410-.776 2.413 2.582-.003zm-3.633.004.961-2.989H4.186l.963 2.995 5.704-.006zM5.470 5.495 8 13.366l2.532-7.876-5.062.005zm-1.371-.999-.780-2.422-1.818 2.425 2.598-.003zM1.499 5.500l5.113 6.817-2.192-6.820L1.500 5.500zm7.889 6.817 5.123-6.830-2.928.002-2.195 6.828z"/></svg></td><td class="ci"><span class="del"><svg class="ic c-red" width="25" height="25" viewBox="0 0 16 16" fill="currentColor" style=""><path d="M11 1.5v1h3.5a.5.5 0 0 1 0 1h-.538l-.853 10.660A2 2 0 0 1 11.115 16h-6.230a2 2 0 0 1-1.994-1.840L2.038 3.5H1.5a.5.5 0 0 1 0-1H5v-1A1.500 1.500 0 0 1 6.500 0h3A1.500 1.500 0 0 1 11 1.500Zm-5 0v1h4v-1a.5.5 0 0 0-.5-.5h-3a.5.5 0 0 0-.5.5ZM4.500 5.029l.5 8.500a.5.5 0 1 0 .998-.060l-.5-8.500a.5.5 0 1 0-.998.060Zm6.530-.528a.5.5 0 0 0-.528.470l-.5 8.500a.5.5 0 0 0 .998.058l.5-8.500a.5.5 0 0 0-.470-.528ZM8 4.500a.5.5 0 0 0-.5.5v8.500a.5.5 0 0 0 1 0V5a.5.5 0 0 0-.5-.5Z"/></svg></span></td></tr>
<tr><td>微乐</td><td>比赛场</td><td><span class="n">30564</span></td><td><span class="n">927124</span></td><td>好运</td><td><span class="n">1</span></td><td><span class="n">0</span></td><td>营业</td><td><span class="n nd">2025/3/29 22:40:18</span></td><td class="ci"><svg class="ic c-blue" width="35" height="35" viewBox="0 0 16 16" fill="currentColor" style=""><path d="M7 14s-1 0-1-1 1-4 5-4 5 3 5 4-1 1-1 1H7Zm4-6a3 3 0 1 0 0-6 3 3 0 0 0 0 6Zm-5.784 6A2.238 2.238 0 0 1 5 13c0-1.355.68-2.75 1.936-3.72A6.325 6.325 0 0 0 5 9c-4 0-5 3-5 4s1 1 1 1h4.216ZM4.5 8a2.5 2.5 0 1 0 0-5 2.5 2.5 0 0 0 0 5Z"/></svg></td><td class="ci"><svg class="ic c-green" width="35" height="35" viewBox="0 0 16 16" fill="currentColor" style=""><path d="m10.213 1.471.691-1.260c.046-.083.03-.147-.048-.192-.085-.038-.15-.019-.195.058l-.7 1.270A4.832 4.832 0 0 0 8.005.941c-.688 0-1.340.135-1.956.404l-.7-1.270C5.303 0 5.239-.020 5.154.020c-.078.046-.094.110-.049.193l.691 1.259a4.250 4.250 0 0 0-1.673 1.476A3.697 3.697 0 0 0 3.500 5.020h9c0-.750-.208-1.440-.623-2.072a4.266 4.266 0 0 0-1.664-1.476ZM6.220 3.303a.367.367 0 0 1-.267.110.350.350 0 0 1-.263-.110.366.366 0 0 1-.107-.264.370.370 0 0 1 .107-.265.351.351 0 0 1 .263-.110c.103 0 .193.037.267.110a.360.360 0 0 1 .112.265.360.360 0 0 1-.112.264Zm4.101 0a.351.351 0 0 1-.262.110.366.366 0 0 1-.268-.110.358.358 0 0 1-.112-.264c0-.103.037-.191.112-.265a.367.367 0 0 1 .268-.110c.104 0 .19.037.262.110a.367.367 0 0 1 .107.265c0 .102-.035.190-.107.264ZM3.500 11.770c0 .294.104.544.311.750.208.204.460.307.760.307h.758l.010 2.182c0 .276.097.510.292.703a.961.961 0 0 0 .7.288.973.973 0 0 0 .710-.288.950.950 0 0 0 .292-.703v-2.182h1.343v2.182c0 .276.097.510.292.703a.972.972 0 0 0 .710.288.973.973 0 0 0 .710-.288.950.950 0 0 0 .292-.703v-2.182h.760c.291 0 .540-.103.749-.308.207-.205.311-.455.311-.750V5.365h-9v6.404Zm10.495-6.587a.983.983 0 0 0-.702.278.910.910 0 0 0-.293.685v4.063c0 .271.098.501.293.690a.970.970 0 0 0 .702.284c.280 0 .517-.095.712-.284a.924.924 0 0 0 .293-.690V6.146a.910.910 0 0 0-.293-.685.995.995 0 0 0-.712-.278Zm-12.702.283a.985.985 0 0 1 .712-.283c.273 0 .507.094.702.283a.913.913 0 0 1 .293.680v4.063a.932.932 0 0 1-.288.690.970.970 0 0 1-.707.284.986.986 0 0 1-.712-.284.924.924 0 0 1-.293-.690V6.146c0-.264.098-.491.293-.680Z"/></svg></td><td class="ci"><svg class="ic c-cyan" width="30" height="30" viewBox="0 0 16 16" fill="currentColor" style=""><path d="M3.100.700a.5.5 0 0 1 .4-.2h9a.5.5 0 0 1 .4.2l2.976 3.974c.149.185.156.450.010.644L8.400 15.300a.5.5 0 0 1-.8 0L.1 5.300a.5.5 0 0 1 0-.6l3-4zm11.386 3.785-1.806-2.410-.776 2.413 2.582-.003zm-3.633.004.961-2.989H4.186l.963 2.995 5.704-.006zM5.470 5.495 8 13.366l2.532-7.876-5.062.005zm-1.371-.999-.780-2.422-1.818 2.425 2.598-.003zM1.499 5.500l5.113 6.817-2.192-6.820L1.500 5.500zm7.889 6.817 5.123-6.830-2.928.002-2.195 6.828z"/></svg></td><td class="ci"><span class="del"><svg class="ic c-red" width="25" height="25" viewBox="0 0 16 16" fill="currentColor" style=""><path d="M11 1.5v1h3.5a.5.5 0 0 1 0 1h-.538l-.853 10.660A2 2 0 0 1 11.115 16h-6.230a2 2 0 0 1-1.994-1.840L2.038 3.5H1.5a.5.5 0 0 1 0-1H5v-1A1.500 1.500 0 0 1 6.500 0h3A1.500 1.500 0 0 1 11 1.500Zm-5 0v1h4v-1a.5.5 0 0 0-.5-.5h-3a.5.5 0 0 0-.5.5ZM4.500 5.029l.5 8.500a.5.5 0 1 0 .998-.060l-.5-8.500a.5.5 0 1 0-.998.060Zm6.530-.528a.5.5 0 0 0-.528.470l-.5 8.500a.5.5 0 0 0 .998.058l.5-8.500a.5.5 0 0 0-.470-.528ZM8 4.500a.5.5 0 0 0-.5.5v8.500a.5.5 0 0 0 1 0V5a.5.5 0 0 0-.5-.5Z"/></svg></span></td></tr>
<tr><td>天盛联盟</td><td>比赛场</td><td><span class="n">30563</span></td><td><span class="n">244192</span></td><td>哄哄</td><td><span class="n">1</span></td><td><span class="n">0</span></td><td>营业</td><td><span class="n nd">2025/3/28 21:35:00</span></td><td class="ci"><svg class="ic c-blue" width="35" height="35" viewBox="0 0 16 16" fill="currentColor" style=""><path d="M7 14s-1 0-1-1 1-4 5-4 5 3 5 4-1 1-1 1H7Zm4-6a3 3 0 1 0 0-6 3 3 0 0 0 0 6Zm-5.784 6A2.238 2.238 0 0 1 5 13c0-1.355.68-2.75 1.936-3.72A6.325 6.325 0 0 0 5 9c-4 0-5 3-5 4s1 1 1 1h4.216ZM4.5 8a2.5 2.5 0 1 0 0-5 2.5 2.5 0 0 0 0 5Z"/></svg></td><td class="ci"><svg class="ic c-green" width="35" height="35" viewBox="0 0 16 16" fill="currentColor" style=""><path d="m10.213 1.471.691-1.260c.046-.083.03-.147-.048-.192-.085-.038-.15-.019-.195.058l-.7 1.270A4.832 4.832 0 0 0 8.005.941c-.688 0-1.340.135-1.956.404l-.7-1.270C5.303 0 5.239-.020 5.154.020c-.078.046-.094.110-.049.193l.691 1.259a4.250 4.250 0 0 0-1.673 1.476A3.697 3.697 0 0 0 3.500 5.020h9c0-.750-.208-1.440-.623-2.072a4.266 4.266 0 0 0-1.664-1.476ZM6.220 3.303a.367.367 0 0 1-.267.110.350.350 0 0 1-.263-.110.366.366 0 0 1-.107-.264.370.370 0 0 1 .107-.265.351.351 0 0 1 .263-.110c.103 0 .193.037.267.110a.360.360 0 0 1 .112.265.360.360 0 0 1-.112.264Zm4.101 0a.351.351 0 0 1-.262.110.366.366 0 0 1-.268-.110.358.358 0 0 1-.112-.264c0-.103.037-.191.112-.265a.367.367 0 0 1 .268-.110c.104 0 .19.037.262.110a.367.367 0 0 1 .107.265c0 .102-.035.190-.107.264ZM3.500 11.770c0 .294.104.544.311.750.208.204.460.307.760.307h.758l.010 2.182c0 .276.097.510.292.703a.961.961 0 0 0 .7.288.973.973 0 0 0 .710-.288.950.950 0 0 0 .292-.703v-2.182h1.343v2.182c0 .276.097.510.292.703a.972.972 0 0 0 .710.288.973.973 0 0 0 .710-.288.950.950 0 0 0 .292-.703v-2.182h.760c.291 0 .540-.103.749-.308.207-.205.311-.455.311-.750V5.365h-9v6.404Zm10.495-6.587a.983.983 0 0 0-.702.278.910.910 0 0 0-.293.685v4.063c0 .271.098.501.293.690a.970.970 0 0 0 .702.284c.280 0 .517-.095.712-.284a.924.924 0 0 0 .293-.690V6.146a.910.910 0 0 0-.293-.685.995.995 0 0 0-.712-.278Zm-12.702.283a.985.985 0 0 1 .712-.283c.273 0 .507.094.702.283a.913.913 0 0 1 .293.680v4.063a.932.932 0 0 1-.288.690.970.970 0 0 1-.707.284.986.986 0 0 1-.712-.284.924.924 0 0 1-.293-.690V6.146c0-.264.098-.491.293-.680Z"/></svg></td><td class="ci"><svg class="ic c-cyan" width="30" height="30" viewBox="0 0 16 16" fill="currentColor" style=""><path d="M3.100.700a.5.5 0 0 1 .4-.2h9a.5.5 0 0 1 .4.2l2.976 3.974c.149.185.156.450.010.644L8.400 15.300a.5.5 0 0 1-.8 0L.1 5.300a.5.5 0 0 1 0-.6l3-4zm11.386 3.785-1.806-2.410-.776 2.413 2.582-.003zm-3.633.004.961-2.989H4.186l.963 2.995 5.704-.006zM5.470 5.495 8 13.366l2.532-7.876-5.062.005zm-1.371-.999-.780-2.422-1.818 2.425 2.598-.003zM1.499 5.500l5.113 6.817-2.192-6.820L1.500 5.500zm7.889 6.817 5.123-6.830-2.928.002-2.195 6.828z"/></svg></td><td class="ci"><span class="del"><svg class="ic c-red" width="25" height="25" viewBox="0 0 16 16" fill="currentColor" style=""><path d="M11 1.5v1h3.5a.5.5 0 0 1 0 1h-.538l-.853 10.660A2 2 0 0 1 11.115 16h-6.230a2 2 0 0 1-1.994-1.840L2.038 3.5H1.5a.5.5 0 0 1 0-1H5v-1A1.500 1.500 0 0 1 6.500 0h3A1.500 1.500 0 0 1 11 1.500Zm-5 0v1h4v-1a.5.5 0 0 0-.5-.5h-3a.5.5 0 0 0-.5.5ZM4.500 5.029l.5 8.500a.5.5 0 1 0 .998-.060l-.5-8.500a.5.5 0 1 0-.998.060Zm6.530-.528a.5.5 0 0 0-.528.470l-.5 8.500a.5.5 0 0 0 .998.058l.5-8.500a.5.5 0 0 0-.470-.528ZM8 4.500a.5.5 0 0 0-.5.5v8.500a.5.5 0 0 0 1 0V5a.5.5 0 0 0-.5-.5Z"/></svg></span></td></tr>
<tr><td>乐在其中</td><td>比赛场</td><td><span class="n">30562</span></td><td><span class="n">853736</span></td><td>希望</td><td><span class="n">8</span></td><td><span class="n">0</span></td><td>营业</td><td><span class="n nd">2025/3/23 19:10:05</span></td><td class="ci"><svg class="ic c-blue" width="35" height="35" viewBox="0 0 16 16" fill="currentColor" style=""><path d="M7 14s-1 0-1-1 1-4 5-4 5 3 5 4-1 1-1 1H7Zm4-6a3 3 0 1 0 0-6 3 3 0 0 0 0 6Zm-5.784 6A2.238 2.238 0 0 1 5 13c0-1.355.68-2.75 1.936-3.72A6.325 6.325 0 0 0 5 9c-4 0-5 3-5 4s1 1 1 1h4.216ZM4.5 8a2.5 2.5 0 1 0 0-5 2.5 2.5 0 0 0 0 5Z"/></svg></td><td class="ci"><svg class="ic c-green" width="35" height="35" viewBox="0 0 16 16" fill="currentColor" style=""><path d="m10.213 1.471.691-1.260c.046-.083.03-.147-.048-.192-.085-.038-.15-.019-.195.058l-.7 1.270A4.832 4.832 0 0 0 8.005.941c-.688 0-1.340.135-1.956.404l-.7-1.270C5.303 0 5.239-.020 5.154.020c-.078.046-.094.110-.049.193l.691 1.259a4.250 4.250 0 0 0-1.673 1.476A3.697 3.697 0 0 0 3.500 5.020h9c0-.750-.208-1.440-.623-2.072a4.266 4.266 0 0 0-1.664-1.476ZM6.220 3.303a.367.367 0 0 1-.267.110.350.350 0 0 1-.263-.110.366.366 0 0 1-.107-.264.370.370 0 0 1 .107-.265.351.351 0 0 1 .263-.110c.103 0 .193.037.267.110a.360.360 0 0 1 .112.265.360.360 0 0 1-.112.264Zm4.101 0a.351.351 0 0 1-.262.110.366.366 0 0 1-.268-.110.358.358 0 0 1-.112-.264c0-.103.037-.191.112-.265a.367.367 0 0 1 .268-.110c.104 0 .19.037.262.110a.367.367 0 0 1 .107.265c0 .102-.035.190-.107.264ZM3.500 11.770c0 .294.104.544.311.750.208.204.460.307.760.307h.758l.010 2.182c0 .276.097.510.292.703a.961.961 0 0 0 .7.288.973.973 0 0 0 .710-.288.950.950 0 0 0 .292-.703v-2.182h1.343v2.182c0 .276.097.510.292.703a.972.972 0 0 0 .710.288.973.973 0 0 0 .710-.288.950.950 0 0 0 .292-.703v-2.182h.760c.291 0 .540-.103.749-.308.207-.205.311-.455.311-.750V5.365h-9v6.404Zm10.495-6.587a.983.983 0 0 0-.702.278.910.910 0 0 0-.293.685v4.063c0 .271.098.501.293.690a.970.970 0 0 0 .702.284c.280 0 .517-.095.712-.284a.924.924 0 0 0 .293-.690V6.146a.910.910 0 0 0-.293-.685.995.995 0 0 0-.712-.278Zm-12.702.283a.985.985 0 0 1 .712-.283c.273 0 .507.094.702.283a.913.913 0 0 1 .293.680v4.063a.932.932 0 0 1-.288.690.970.970 0 0 1-.707.284.986.986 0 0 1-.712-.284.924.924 0 0 1-.293-.690V6.146c0-.264.098-.491.293-.680Z"/></svg></td><td class="ci"><svg class="ic c-cyan" width="30" height="30" viewBox="0 0 16 16" fill="currentColor" style=""><path d="M3.100.700a.5.5 0 0 1 .4-.2h9a.5.5 0 0 1 .4.2l2.976 3.974c.149.185.156.450.010.644L8.400 15.300a.5.5 0 0 1-.8 0L.1 5.300a.5.5 0 0 1 0-.6l3-4zm11.386 3.785-1.806-2.410-.776 2.413 2.582-.003zm-3.633.004.961-2.989H4.186l.963 2.995 5.704-.006zM5.470 5.495 8 13.366l2.532-7.876-5.062.005zm-1.371-.999-.780-2.422-1.818 2.425 2.598-.003zM1.499 5.500l5.113 6.817-2.192-6.820L1.500 5.500zm7.889 6.817 5.123-6.830-2.928.002-2.195 6.828z"/></svg></td><td class="ci"><span class="del"><svg class="ic c-red" width="25" height="25" viewBox="0 0 16 16" fill="currentColor" style=""><path d="M11 1.5v1h3.5a.5.5 0 0 1 0 1h-.538l-.853 10.660A2 2 0 0 1 11.115 16h-6.230a2 2 0 0 1-1.994-1.840L2.038 3.5H1.5a.5.5 0 0 1 0-1H5v-1A1.500 1.500 0 0 1 6.500 0h3A1.500 1.500 0 0 1 11 1.500Zm-5 0v1h4v-1a.5.5 0 0 0-.5-.5h-3a.5.5 0 0 0-.5.5ZM4.500 5.029l.5 8.500a.5.5 0 1 0 .998-.060l-.5-8.500a.5.5 0 1 0-.998.060Zm6.530-.528a.5.5 0 0 0-.528.470l-.5 8.500a.5.5 0 0 0 .998.058l.5-8.500a.5.5 0 0 0-.470-.528ZM8 4.500a.5.5 0 0 0-.5.5v8.500a.5.5 0 0 0 1 0V5a.5.5 0 0 0-.5-.5Z"/></svg></span></td></tr>
<tr><td>一天</td><td>比赛场</td><td><span class="n">30559</span></td><td><span class="n">568145</span></td><td><span class="s7">⁷</span>分饱</td><td><span class="n">2</span></td><td><span class="n">0</span></td><td>营业</td><td><span class="n nd">2025/3/11 12:05:28</span></td><td class="ci"><svg class="ic c-blue" width="35" height="35" viewBox="0 0 16 16" fill="currentColor" style=""><path d="M7 14s-1 0-1-1 1-4 5-4 5 3 5 4-1 1-1 1H7Zm4-6a3 3 0 1 0 0-6 3 3 0 0 0 0 6Zm-5.784 6A2.238 2.238 0 0 1 5 13c0-1.355.68-2.75 1.936-3.72A6.325 6.325 0 0 0 5 9c-4 0-5 3-5 4s1 1 1 1h4.216ZM4.5 8a2.5 2.5 0 1 0 0-5 2.5 2.5 0 0 0 0 5Z"/></svg></td><td class="ci"><svg class="ic c-green" width="35" height="35" viewBox="0 0 16 16" fill="currentColor" style=""><path d="m10.213 1.471.691-1.260c.046-.083.03-.147-.048-.192-.085-.038-.15-.019-.195.058l-.7 1.270A4.832 4.832 0 0 0 8.005.941c-.688 0-1.340.135-1.956.404l-.7-1.270C5.303 0 5.239-.020 5.154.020c-.078.046-.094.110-.049.193l.691 1.259a4.250 4.250 0 0 0-1.673 1.476A3.697 3.697 0 0 0 3.500 5.020h9c0-.750-.208-1.440-.623-2.072a4.266 4.266 0 0 0-1.664-1.476ZM6.220 3.303a.367.367 0 0 1-.267.110.350.350 0 0 1-.263-.110.366.366 0 0 1-.107-.264.370.370 0 0 1 .107-.265.351.351 0 0 1 .263-.110c.103 0 .193.037.267.110a.360.360 0 0 1 .112.265.360.360 0 0 1-.112.264Zm4.101 0a.351.351 0 0 1-.262.110.366.366 0 0 1-.268-.110.358.358 0 0 1-.112-.264c0-.103.037-.191.112-.265a.367.367 0 0 1 .268-.110c.104 0 .19.037.262.110a.367.367 0 0 1 .107.265c0 .102-.035.190-.107.264ZM3.500 11.770c0 .294.104.544.311.750.208.204.460.307.760.307h.758l.010 2.182c0 .276.097.510.292.703a.961.961 0 0 0 .7.288.973.973 0 0 0 .710-.288.950.950 0 0 0 .292-.703v-2.182h1.343v2.182c0 .276.097.510.292.703a.972.972 0 0 0 .710.288.973.973 0 0 0 .710-.288.950.950 0 0 0 .292-.703v-2.182h.760c.291 0 .540-.103.749-.308.207-.205.311-.455.311-.750V5.365h-9v6.404Zm10.495-6.587a.983.983 0 0 0-.702.278.910.910 0 0 0-.293.685v4.063c0 .271.098.501.293.690a.970.970 0 0 0 .702.284c.280 0 .517-.095.712-.284a.924.924 0 0 0 .293-.690V6.146a.910.910 0 0 0-.293-.685.995.995 0 0 0-.712-.278Zm-12.702.283a.985.985 0 0 1 .712-.283c.273 0 .507.094.702.283a.913.913 0 0 1 .293.680v4.063a.932.932 0 0 1-.288.690.970.970 0 0 1-.707.284.986.986 0 0 1-.712-.284.924.924 0 0 1-.293-.690V6.146c0-.264.098-.491.293-.680Z"/></svg></td><td class="ci"><svg class="ic c-cyan" width="30" height="30" viewBox="0 0 16 16" fill="currentColor" style=""><path d="M3.100.700a.5.5 0 0 1 .4-.2h9a.5.5 0 0 1 .4.2l2.976 3.974c.149.185.156.450.010.644L8.400 15.300a.5.5 0 0 1-.8 0L.1 5.300a.5.5 0 0 1 0-.6l3-4zm11.386 3.785-1.806-2.410-.776 2.413 2.582-.003zm-3.633.004.961-2.989H4.186l.963 2.995 5.704-.006zM5.470 5.495 8 13.366l2.532-7.876-5.062.005zm-1.371-.999-.780-2.422-1.818 2.425 2.598-.003zM1.499 5.500l5.113 6.817-2.192-6.820L1.500 5.500zm7.889 6.817 5.123-6.830-2.928.002-2.195 6.828z"/></svg></td><td class="ci"><span class="del"><svg class="ic c-red" width="25" height="25" viewBox="0 0 16 16" fill="currentColor" style=""><path d="M11 1.5v1h3.5a.5.5 0 0 1 0 1h-.538l-.853 10.660A2 2 0 0 1 11.115 16h-6.230a2 2 0 0 1-1.994-1.840L2.038 3.5H1.5a.5.5 0 0 1 0-1H5v-1A1.500 1.500 0 0 1 6.500 0h3A1.500 1.500 0 0 1 11 1.500Zm-5 0v1h4v-1a.5.5 0 0 0-.5-.5h-3a.5.5 0 0 0-.5.5ZM4.500 5.029l.5 8.500a.5.5 0 1 0 .998-.060l-.5-8.500a.5.5 0 1 0-.998.060Zm6.530-.528a.5.5 0 0 0-.528.470l-.5 8.500a.5.5 0 0 0 .998.058l.5-8.500a.5.5 0 0 0-.470-.528ZM8 4.500a.5.5 0 0 0-.5.5v8.500a.5.5 0 0 0 1 0V5a.5.5 0 0 0-.5-.5Z"/></svg></span></td></tr>
<tr><td>跑得快<span class="n">2025</span></td><td>比赛场</td><td><span class="n">30557</span></td><td><span class="n">652591</span></td><td>阿白</td><td><span class="n">3</span></td><td><span class="n">0</span></td><td>营业</td><td><span class="n nd">2025/3/6 19:15:59</span></td><td class="ci"><svg class="ic c-blue" width="35" height="35" viewBox="0 0 16 16" fill="currentColor" style=""><path d="M7 14s-1 0-1-1 1-4 5-4 5 3 5 4-1 1-1 1H7Zm4-6a3 3 0 1 0 0-6 3 3 0 0 0 0 6Zm-5.784 6A2.238 2.238 0 0 1 5 13c0-1.355.68-2.75 1.936-3.72A6.325 6.325 0 0 0 5 9c-4 0-5 3-5 4s1 1 1 1h4.216ZM4.5 8a2.5 2.5 0 1 0 0-5 2.5 2.5 0 0 0 0 5Z"/></svg></td><td class="ci"><svg class="ic c-green" width="35" height="35" viewBox="0 0 16 16" fill="currentColor" style=""><path d="m10.213 1.471.691-1.260c.046-.083.03-.147-.048-.192-.085-.038-.15-.019-.195.058l-.7 1.270A4.832 4.832 0 0 0 8.005.941c-.688 0-1.340.135-1.956.404l-.7-1.270C5.303 0 5.239-.020 5.154.020c-.078.046-.094.110-.049.193l.691 1.259a4.250 4.250 0 0 0-1.673 1.476A3.697 3.697 0 0 0 3.500 5.020h9c0-.750-.208-1.440-.623-2.072a4.266 4.266 0 0 0-1.664-1.476ZM6.220 3.303a.367.367 0 0 1-.267.110.350.350 0 0 1-.263-.110.366.366 0 0 1-.107-.264.370.370 0 0 1 .107-.265.351.351 0 0 1 .263-.110c.103 0 .193.037.267.110a.360.360 0 0 1 .112.265.360.360 0 0 1-.112.264Zm4.101 0a.351.351 0 0 1-.262.110.366.366 0 0 1-.268-.110.358.358 0 0 1-.112-.264c0-.103.037-.191.112-.265a.367.367 0 0 1 .268-.110c.104 0 .19.037.262.110a.367.367 0 0 1 .107.265c0 .102-.035.190-.107.264ZM3.500 11.770c0 .294.104.544.311.750.208.204.460.307.760.307h.758l.010 2.182c0 .276.097.510.292.703a.961.961 0 0 0 .7.288.973.973 0 0 0 .710-.288.950.950 0 0 0 .292-.703v-2.182h1.343v2.182c0 .276.097.510.292.703a.972.972 0 0 0 .710.288.973.973 0 0 0 .710-.288.950.950 0 0 0 .292-.703v-2.182h.760c.291 0 .540-.103.749-.308.207-.205.311-.455.311-.750V5.365h-9v6.404Zm10.495-6.587a.983.983 0 0 0-.702.278.910.910 0 0 0-.293.685v4.063c0 .271.098.501.293.690a.970.970 0 0 0 .702.284c.280 0 .517-.095.712-.284a.924.924 0 0 0 .293-.690V6.146a.910.910 0 0 0-.293-.685.995.995 0 0 0-.712-.278Zm-12.702.283a.985.985 0 0 1 .712-.283c.273 0 .507.094.702.283a.913.913 0 0 1 .293.680v4.063a.932.932 0 0 1-.288.690.970.970 0 0 1-.707.284.986.986 0 0 1-.712-.284.924.924 0 0 1-.293-.690V6.146c0-.264.098-.491.293-.680Z"/></svg></td><td class="ci"><svg class="ic c-cyan" width="30" height="30" viewBox="0 0 16 16" fill="currentColor" style=""><path d="M3.100.700a.5.5 0 0 1 .4-.2h9a.5.5 0 0 1 .4.2l2.976 3.974c.149.185.156.450.010.644L8.400 15.300a.5.5 0 0 1-.8 0L.1 5.300a.5.5 0 0 1 0-.6l3-4zm11.386 3.785-1.806-2.410-.776 2.413 2.582-.003zm-3.633.004.961-2.989H4.186l.963 2.995 5.704-.006zM5.470 5.495 8 13.366l2.532-7.876-5.062.005zm-1.371-.999-.780-2.422-1.818 2.425 2.598-.003zM1.499 5.500l5.113 6.817-2.192-6.820L1.500 5.500zm7.889 6.817 5.123-6.830-2.928.002-2.195 6.828z"/></svg></td><td class="ci"><span class="del"><svg class="ic c-red" width="25" height="25" viewBox="0 0 16 16" fill="currentColor" style=""><path d="M11 1.5v1h3.5a.5.5 0 0 1 0 1h-.538l-.853 10.660A2 2 0 0 1 11.115 16h-6.230a2 2 0 0 1-1.994-1.840L2.038 3.5H1.5a.5.5 0 0 1 0-1H5v-1A1.500 1.500 0 0 1 6.500 0h3A1.500 1.500 0 0 1 11 1.500Zm-5 0v1h4v-1a.5.5 0 0 0-.5-.5h-3a.5.5 0 0 0-.5.5ZM4.500 5.029l.5 8.500a.5.5 0 1 0 .998-.060l-.5-8.500a.5.5 0 1 0-.998.060Zm6.530-.528a.5.5 0 0 0-.528.470l-.5 8.500a.5.5 0 0 0 .998.058l.5-8.500a.5.5 0 0 0-.470-.528ZM8 4.500a.5.5 0 0 0-.5.5v8.500a.5.5 0 0 0 1 0V5a.5.5 0 0 0-.5-.5Z"/></svg></span></td></tr>
<tr><td>老板发财</td><td>比赛场</td><td><span class="n">30556</span></td><td><span class="n">760173</span></td><td>　空白格</td><td><span class="n">1</span></td><td><span class="n">0</span></td><td>营业</td><td><span class="n nd">2025/3/6 05:14:40</span></td><td class="ci"><svg class="ic c-blue" width="35" height="35" viewBox="0 0 16 16" fill="currentColor" style=""><path d="M7 14s-1 0-1-1 1-4 5-4 5 3 5 4-1 1-1 1H7Zm4-6a3 3 0 1 0 0-6 3 3 0 0 0 0 6Zm-5.784 6A2.238 2.238 0 0 1 5 13c0-1.355.68-2.75 1.936-3.72A6.325 6.325 0 0 0 5 9c-4 0-5 3-5 4s1 1 1 1h4.216ZM4.5 8a2.5 2.5 0 1 0 0-5 2.5 2.5 0 0 0 0 5Z"/></svg></td><td class="ci"><svg class="ic c-green" width="35" height="35" viewBox="0 0 16 16" fill="currentColor" style=""><path d="m10.213 1.471.691-1.260c.046-.083.03-.147-.048-.192-.085-.038-.15-.019-.195.058l-.7 1.270A4.832 4.832 0 0 0 8.005.941c-.688 0-1.340.135-1.956.404l-.7-1.270C5.303 0 5.239-.020 5.154.020c-.078.046-.094.110-.049.193l.691 1.259a4.250 4.250 0 0 0-1.673 1.476A3.697 3.697 0 0 0 3.500 5.020h9c0-.750-.208-1.440-.623-2.072a4.266 4.266 0 0 0-1.664-1.476ZM6.220 3.303a.367.367 0 0 1-.267.110.350.350 0 0 1-.263-.110.366.366 0 0 1-.107-.264.370.370 0 0 1 .107-.265.351.351 0 0 1 .263-.110c.103 0 .193.037.267.110a.360.360 0 0 1 .112.265.360.360 0 0 1-.112.264Zm4.101 0a.351.351 0 0 1-.262.110.366.366 0 0 1-.268-.110.358.358 0 0 1-.112-.264c0-.103.037-.191.112-.265a.367.367 0 0 1 .268-.110c.104 0 .19.037.262.110a.367.367 0 0 1 .107.265c0 .102-.035.190-.107.264ZM3.500 11.770c0 .294.104.544.311.750.208.204.460.307.760.307h.758l.010 2.182c0 .276.097.510.292.703a.961.961 0 0 0 .7.288.973.973 0 0 0 .710-.288.950.950 0 0 0 .292-.703v-2.182h1.343v2.182c0 .276.097.510.292.703a.972.972 0 0 0 .710.288.973.973 0 0 0 .710-.288.950.950 0 0 0 .292-.703v-2.182h.760c.291 0 .540-.103.749-.308.207-.205.311-.455.311-.750V5.365h-9v6.404Zm10.495-6.587a.983.983 0 0 0-.702.278.910.910 0 0 0-.293.685v4.063c0 .271.098.501.293.690a.970.970 0 0 0 .702.284c.280 0 .517-.095.712-.284a.924.924 0 0 0 .293-.690V6.146a.910.910 0 0 0-.293-.685.995.995 0 0 0-.712-.278Zm-12.702.283a.985.985 0 0 1 .712-.283c.273 0 .507.094.702.283a.913.913 0 0 1 .293.680v4.063a.932.932 0 0 1-.288.690.970.970 0 0 1-.707.284.986.986 0 0 1-.712-.284.924.924 0 0 1-.293-.690V6.146c0-.264.098-.491.293-.680Z"/></svg></td><td class="ci"><svg class="ic c-cyan" width="30" height="30" viewBox="0 0 16 16" fill="currentColor" style=""><path d="M3.100.700a.5.5 0 0 1 .4-.2h9a.5.5 0 0 1 .4.2l2.976 3.974c.149.185.156.450.010.644L8.400 15.300a.5.5 0 0 1-.8 0L.1 5.300a.5.5 0 0 1 0-.6l3-4zm11.386 3.785-1.806-2.410-.776 2.413 2.582-.003zm-3.633.004.961-2.989H4.186l.963 2.995 5.704-.006zM5.470 5.495 8 13.366l2.532-7.876-5.062.005zm-1.371-.999-.780-2.422-1.818 2.425 2.598-.003zM1.499 5.500l5.113 6.817-2.192-6.820L1.500 5.500zm7.889 6.817 5.123-6.830-2.928.002-2.195 6.828z"/></svg></td><td class="ci"><span class="del"><svg class="ic c-red" width="25" height="25" viewBox="0 0 16 16" fill="currentColor" style=""><path d="M11 1.5v1h3.5a.5.5 0 0 1 0 1h-.538l-.853 10.660A2 2 0 0 1 11.115 16h-6.230a2 2 0 0 1-1.994-1.840L2.038 3.5H1.5a.5.5 0 0 1 0-1H5v-1A1.500 1.500 0 0 1 6.500 0h3A1.500 1.500 0 0 1 11 1.500Zm-5 0v1h4v-1a.5.5 0 0 0-.5-.5h-3a.5.5 0 0 0-.5.5ZM4.500 5.029l.5 8.500a.5.5 0 1 0 .998-.060l-.5-8.500a.5.5 0 1 0-.998.060Zm6.530-.528a.5.5 0 0 0-.528.470l-.5 8.500a.5.5 0 0 0 .998.058l.5-8.500a.5.5 0 0 0-.470-.528ZM8 4.500a.5.5 0 0 0-.5.5v8.500a.5.5 0 0 0 1 0V5a.5.5 0 0 0-.5-.5Z"/></svg></span></td></tr>
<tr><td>大将军联盟</td><td>比赛场</td><td><span class="n">30554</span></td><td><span class="n">243679</span></td><td></td><td><span class="n">1</span></td><td><span class="n">0</span></td><td>营业</td><td><span class="n nd">2025/2/27 23:06:27</span></td><td class="ci"><svg class="ic c-blue" width="35" height="35" viewBox="0 0 16 16" fill="currentColor" style=""><path d="M7 14s-1 0-1-1 1-4 5-4 5 3 5 4-1 1-1 1H7Zm4-6a3 3 0 1 0 0-6 3 3 0 0 0 0 6Zm-5.784 6A2.238 2.238 0 0 1 5 13c0-1.355.68-2.75 1.936-3.72A6.325 6.325 0 0 0 5 9c-4 0-5 3-5 4s1 1 1 1h4.216ZM4.5 8a2.5 2.5 0 1 0 0-5 2.5 2.5 0 0 0 0 5Z"/></svg></td><td class="ci"><svg class="ic c-green" width="35" height="35" viewBox="0 0 16 16" fill="currentColor" style=""><path d="m10.213 1.471.691-1.260c.046-.083.03-.147-.048-.192-.085-.038-.15-.019-.195.058l-.7 1.270A4.832 4.832 0 0 0 8.005.941c-.688 0-1.340.135-1.956.404l-.7-1.270C5.303 0 5.239-.020 5.154.020c-.078.046-.094.110-.049.193l.691 1.259a4.250 4.250 0 0 0-1.673 1.476A3.697 3.697 0 0 0 3.500 5.020h9c0-.750-.208-1.440-.623-2.072a4.266 4.266 0 0 0-1.664-1.476ZM6.220 3.303a.367.367 0 0 1-.267.110.350.350 0 0 1-.263-.110.366.366 0 0 1-.107-.264.370.370 0 0 1 .107-.265.351.351 0 0 1 .263-.110c.103 0 .193.037.267.110a.360.360 0 0 1 .112.265.360.360 0 0 1-.112.264Zm4.101 0a.351.351 0 0 1-.262.110.366.366 0 0 1-.268-.110.358.358 0 0 1-.112-.264c0-.103.037-.191.112-.265a.367.367 0 0 1 .268-.110c.104 0 .19.037.262.110a.367.367 0 0 1 .107.265c0 .102-.035.190-.107.264ZM3.500 11.770c0 .294.104.544.311.750.208.204.460.307.760.307h.758l.010 2.182c0 .276.097.510.292.703a.961.961 0 0 0 .7.288.973.973 0 0 0 .710-.288.950.950 0 0 0 .292-.703v-2.182h1.343v2.182c0 .276.097.510.292.703a.972.972 0 0 0 .710.288.973.973 0 0 0 .710-.288.950.950 0 0 0 .292-.703v-2.182h.760c.291 0 .540-.103.749-.308.207-.205.311-.455.311-.750V5.365h-9v6.404Zm10.495-6.587a.983.983 0 0 0-.702.278.910.910 0 0 0-.293.685v4.063c0 .271.098.501.293.690a.970.970 0 0 0 .702.284c.280 0 .517-.095.712-.284a.924.924 0 0 0 .293-.690V6.146a.910.910 0 0 0-.293-.685.995.995 0 0 0-.712-.278Zm-12.702.283a.985.985 0 0 1 .712-.283c.273 0 .507.094.702.283a.913.913 0 0 1 .293.680v4.063a.932.932 0 0 1-.288.690.970.970 0 0 1-.707.284.986.986 0 0 1-.712-.284.924.924 0 0 1-.293-.690V6.146c0-.264.098-.491.293-.680Z"/></svg></td><td class="ci"><svg class="ic c-cyan" width="30" height="30" viewBox="0 0 16 16" fill="currentColor" style=""><path d="M3.100.700a.5.5 0 0 1 .4-.2h9a.5.5 0 0 1 .4.2l2.976 3.974c.149.185.156.450.010.644L8.400 15.300a.5.5 0 0 1-.8 0L.1 5.300a.5.5 0 0 1 0-.6l3-4zm11.386 3.785-1.806-2.410-.776 2.413 2.582-.003zm-3.633.004.961-2.989H4.186l.963 2.995 5.704-.006zM5.470 5.495 8 13.366l2.532-7.876-5.062.005zm-1.371-.999-.780-2.422-1.818 2.425 2.598-.003zM1.499 5.500l5.113 6.817-2.192-6.820L1.500 5.500zm7.889 6.817 5.123-6.830-2.928.002-2.195 6.828z"/></svg></td><td class="ci"><span class="del"><svg class="ic c-red" width="25" height="25" viewBox="0 0 16 16" fill="currentColor" style=""><path d="M11 1.5v1h3.5a.5.5 0 0 1 0 1h-.538l-.853 10.660A2 2 0 0 1 11.115 16h-6.230a2 2 0 0 1-1.994-1.840L2.038 3.5H1.5a.5.5 0 0 1 0-1H5v-1A1.500 1.500 0 0 1 6.500 0h3A1.500 1.500 0 0 1 11 1.500Zm-5 0v1h4v-1a.5.5 0 0 0-.5-.5h-3a.5.5 0 0 0-.5.5ZM4.500 5.029l.5 8.500a.5.5 0 1 0 .998-.060l-.5-8.500a.5.5 0 1 0-.998.060Zm6.530-.528a.5.5 0 0 0-.528.470l-.5 8.500a.5.5 0 0 0 .998.058l.5-8.500a.5.5 0 0 0-.470-.528ZM8 4.500a.5.5 0 0 0-.5.5v8.500a.5.5 0 0 0 1 0V5a.5.5 0 0 0-.5-.5Z"/></svg></span></td></tr>
<tr><td></td><td></td><td></td><td></td><td></td><td></td><td></td><td></td><td></td><td></td><td></td><td></td><td></td></tr>
</tbody></table>
<div class="tip"><div class="tipin">查看联盟机器人</div><div class="tiparr"></div></div>
</div></div>
<div class="footer">Copyright © 2023. All right reserved.</div>
<div class="strip"></div>
</body>
</html>
